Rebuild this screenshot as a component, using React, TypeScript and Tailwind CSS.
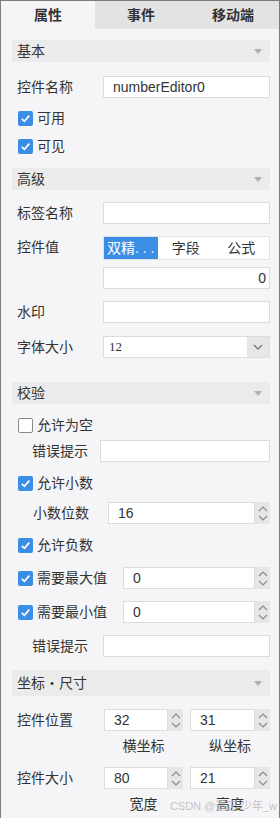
import React from "react";

const font = { fontFamily: '"Liberation Sans", "Noto Sans CJK SC", sans-serif' };

function Header({ title, tall }: { title: string; tall?: boolean }) {
  return (
    <div
      className={`flex items-center justify-between bg-[#ebebeb] pl-[5px] pr-[8px] text-[14px] text-[#333] ${
        tall ? "h-[26px]" : "h-[22px]"
      }`}
    >
      <span>{title}</span>
      <span className="h-0 w-0 border-x-[4px] border-t-[5px] border-x-transparent border-t-[#b0b0b0]" />
    </div>
  );
}

function Check({ checked }: { checked?: boolean }) {
  return checked ? (
    <span className="flex h-[15px] w-[15px] shrink-0 items-center justify-center rounded-[2px] bg-[#3a8ee6]">
      <svg width="11" height="11" viewBox="0 0 11 11">
        <path d="M1.8 5.8 L4.4 8.3 L9.3 2.6" fill="none" stroke="white" strokeWidth="1.7" />
      </svg>
    </span>
  ) : (
    <span className="h-[15px] w-[15px] shrink-0 rounded-[2px] border border-[#8a8a8a] bg-white" />
  );
}

function Input({ value, right, className = "" }: { value?: string; right?: boolean; className?: string }) {
  return (
    <div
      className={`flex h-[22px] items-center border border-[#dcdcdc] bg-white px-[9px] text-[14px] text-[#333] ${
        right ? "justify-end" : ""
      } ${className}`}
    >
      {value}
    </div>
  );
}

function Spin({ value, className = "" }: { value: string; className?: string }) {
  return (
    <div className={`flex h-[22px] ${className}`}>
      <div className="flex flex-1 items-center border border-[#dcdcdc] bg-white pl-[9px] text-[14px] text-[#333]">
        {value}
      </div>
      <div className="flex w-[15px] flex-col items-center justify-center gap-[3px] bg-[#e6e6e6]">
        <svg width="10" height="6" viewBox="0 0 10 6">
          <path d="M1 5 L5 1 L9 5" fill="none" stroke="#8a8a8a" strokeWidth="1.2" />
        </svg>
        <svg width="10" height="6" viewBox="0 0 10 6">
          <path d="M1 1 L5 5 L9 1" fill="none" stroke="#8a8a8a" strokeWidth="1.2" />
        </svg>
      </div>
    </div>
  );
}

function Row({ label, children, className = "" }: { label: string; children: React.ReactNode; className?: string }) {
  return (
    <div className={`flex items-center ${className}`}>
      <span className="w-[91px] shrink-0 pl-[5px] text-[14px] text-[#333]">{label}</span>
      <div className="flex-1">{children}</div>
    </div>
  );
}

function CheckRow({ label, checked, className = "" }: { label: string; checked?: boolean; className?: string }) {
  return (
    <div className={`flex h-[20px] items-center gap-[4px] pl-[6px] text-[14px] text-[#333] ${className}`}>
      <Check checked={checked} />
      <span>{label}</span>
    </div>
  );
}

export default function App() {
  return (
    <div
      style={font}
      className="relative h-[818px] w-[280px] overflow-hidden border-x border-t border-[#7d7d7d] bg-[#f5f5f7]"
    >
      {/* tabs */}
      <div className="flex h-[28px] text-[14px] font-semibold text-[#333]">
        <div className="flex w-[94px] items-center justify-center bg-[#f5f5f7]">属性</div>
        <div className="flex w-[92px] items-center justify-center bg-[#e3e3e3]">事件</div>
        <div className="flex flex-1 items-center justify-center bg-[#e3e3e3]">移动端</div>
      </div>

      <div className="pl-[11px] pr-[9px]">
        <div className="mt-[11px]">
          <Header title="基本" />
        </div>
        <Row label="控件名称" className="mt-[14px]">
          <Input value="numberEditor0" />
        </Row>
        <CheckRow label="可用" checked className="mt-[10px]" />
        <CheckRow label="可见" checked className="mt-[8px]" />

        <div className="mt-[12px]">
          <Header title="高级" />
        </div>
        <Row label="标签名称" className="mt-[12px]">
          <Input />
        </Row>
        <div className="mt-[12px] flex">
          <span className="w-[91px] shrink-0 pl-[5px] pt-[1px] text-[14px] text-[#333]">控件值</span>
          <div className="flex-1">
            <div className="flex h-[24px] border border-[#e2e2e2] bg-white text-[14px] text-[#333]">
              <div className="flex w-[54px] items-center bg-[#3a8ee6] pl-[3px] text-white">双精. . .</div>
              <div className="flex flex-1 items-center justify-center">字段</div>
              <div className="flex flex-1 items-center justify-center">公式</div>
            </div>
            <Input value="0" right className="mt-[7px] pr-[3px]" />
          </div>
        </div>
        <Row label="水印" className="mt-[12px]">
          <Input />
        </Row>
        <Row label="字体大小" className="mt-[13px]">
          <div className="flex h-[22px] border border-[#dcdcdc] bg-white">
            <div
              className="flex flex-1 items-center pl-[5px] text-[13px] text-[#333]"
              style={{ fontFamily: '"Liberation Serif", serif' }}
            >
              12
            </div>
            <div className="flex w-[22px] items-center justify-center bg-[#e6e6e6]">
              <svg width="10" height="6" viewBox="0 0 10 6">
                <path d="M1 1 L5 5 L9 1" fill="none" stroke="#777" strokeWidth="1.3" />
              </svg>
            </div>
          </div>
        </Row>

        <div className="mt-[24px]">
          <Header title="校验" />
        </div>
        <CheckRow label="允许为空" className="mt-[11px]" />
        <div className="mt-[5px] flex items-center">
          <span className="w-[88px] shrink-0 pl-[20px] text-[14px] text-[#333]">错误提示</span>
          <Input className="flex-1" />
        </div>
        <CheckRow label="允许小数" checked className="mt-[11px]" />
        <div className="mt-[9px] flex items-center">
          <span className="w-[96px] shrink-0 pl-[21px] text-[14px] text-[#333]">小数位数</span>
          <Spin value="16" className="flex-1" />
        </div>
        <CheckRow label="允许负数" checked className="mt-[11px]" />
        <div className="mt-[12px] flex items-center">
          <div className="w-[111px] shrink-0">
            <CheckRow label="需要最大值" checked />
          </div>
          <Spin value="0" className="flex-1" />
        </div>
        <div className="mt-[12px] flex items-center">
          <div className="w-[111px] shrink-0">
            <CheckRow label="需要最小值" checked />
          </div>
          <Spin value="0" className="flex-1" />
        </div>
        <div className="mt-[12px] flex items-center">
          <span className="w-[91px] shrink-0 pl-[20px] text-[14px] text-[#333]">错误提示</span>
          <Input className="flex-1" />
        </div>

        <div className="mt-[13px]">
          <Header title="坐标・尺寸" tall />
        </div>
        <div className="mt-[13px] flex items-center">
          <span className="w-[92px] shrink-0 pl-[5px] text-[14px] text-[#333]">控件位置</span>
          <Spin value="32" className="w-[79px]" />
          <Spin value="31" className="ml-[7px] flex-1" />
        </div>
        <div className="mt-[5px] flex h-[20px] items-center text-[14px] text-[#333]">
          <span className="w-[92px] shrink-0" />
          <span className="w-[79px] text-center">横坐标</span>
          <span className="ml-[7px] flex-1 text-center">纵坐标</span>
        </div>
        <div className="mt-[11px] flex items-center">
          <span className="w-[92px] shrink-0 pl-[5px] text-[14px] text-[#333]">控件大小</span>
          <Spin value="80" className="w-[79px]" />
          <Spin value="21" className="ml-[7px] flex-1" />
        </div>
        <div className="mt-[5px] flex h-[20px] items-center text-[14px] text-[#333]">
          <span className="w-[92px] shrink-0" />
          <span className="w-[79px] text-center">宽度</span>
          <span className="ml-[7px] flex-1 text-center">高度</span>
        </div>
      </div>

      {/* watermark */}
      <span className="pointer-events-none absolute bottom-[4px] right-[2px] text-[11px] text-[#c4c4c4]">
        CSDN @遗忘-少年_w
      </span>
    </div>
  );
}
